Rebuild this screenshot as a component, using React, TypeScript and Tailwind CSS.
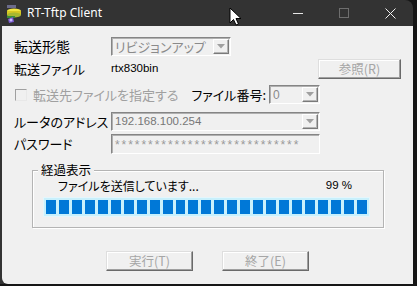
import React from 'react';

const jp = "font-['Noto_Sans_CJK_JP',sans-serif] [font-feature-settings:'palt'_1] whitespace-nowrap";

function ArrowBtn() {
  return (
    <div className="w-[16px] h-full flex items-center justify-center border border-t-white border-l-white border-r-[#7a7a7a] border-b-[#7a7a7a] bg-[#f0f0f0] shadow-[inset_-1px_-1px_0_#b4b4b4]">
      <svg width="8" height="5" viewBox="0 0 8 5">
        <path d="M0 0 H8 L4 4.5 Z" fill="#a0a0a0" />
      </svg>
    </div>
  );
}

function Combo({ text, className, textClass }: { text: string; className: string; textClass: string }) {
  return (
    <div className={`flex h-full border border-t-[#858585] border-l-[#858585] border-r-white border-b-white bg-[#f0f0f0] shadow-[inset_1px_1px_0_#b0b0b0] p-[1px] ${className}`}>
      <div className={`flex-1 flex items-center pl-[2px] text-[#8a8a8a] ${textClass}`}>{text}</div>
      <ArrowBtn />
    </div>
  );
}

function Button({ label, className }: { label: string; className: string }) {
  return (
    <div
      className={`h-[20px] flex items-center justify-center border border-t-[#dedede] border-l-[#dedede] border-r-[#6a6a6a] border-b-[#6a6a6a] shadow-[inset_-1px_-1px_0_#a0a0a0,inset_1px_1px_0_#ffffff] bg-[#f0f0f0] text-[12.5px] text-[#a6a6a6] ${jp} ${className}`}
    >
      {label}
    </div>
  );
}

function AppIcon() {
  return (
    <svg width="18" height="20" viewBox="0 0 18 20">
      <rect x="2" y="1" width="9" height="3" fill="#6b6b8a" />
      <ellipse cx="9" cy="7" rx="7" ry="2.5" fill="#f2e640" />
      <rect x="2" y="7" width="14" height="4" fill="#d8c820" />
      <ellipse cx="9" cy="11" rx="7" ry="2.5" fill="#a8b830" />
      <rect x="2" y="12" width="8" height="2" fill="#3a8a3a" />
      <path d="M3 15 L8 13 L9 18 L4 19 Z" fill="#7a5ad0" />
      <circle cx="6" cy="16" r="1.5" fill="#c8b8ff" />
    </svg>
  );
}

function Cursor() {
  return (
    <svg width="13" height="19" viewBox="0 0 13 19" className="absolute left-[229px] top-[7px]">
      <path d="M1 1 V16 L4.5 12.5 L7 18 L9.5 17 L7 11.5 H12 Z" fill="#ffffff" stroke="#000000" strokeWidth="1" strokeLinejoin="round" />
    </svg>
  );
}

export default function App() {
  const blocks = Array.from({ length: 25 });

  return (
    <div className="w-[417px] h-[286px] bg-[#161616] overflow-hidden relative">
      <div className="w-[413px] h-[284px] flex flex-col bg-[#333333] rounded-tr-[8px]">
        {/* title bar */}
        <div className="h-[26px] flex items-center shrink-0">
          <div className="ml-[5px] mt-[1px]">
            <AppIcon />
          </div>
          <span className="ml-[4px] text-[12px] text-white font-['Noto_Sans',sans-serif]">RT-Tftp Client</span>
          <div className="ml-auto flex items-center h-full">
            <div className="w-[46px] h-full flex items-center justify-center">
              <div className="w-[10px] h-[1px] bg-[#e6e6e6]" />
            </div>
            <div className="w-[46px] h-full flex items-center justify-center">
              <div className="w-[10px] h-[10px] border border-[#6e6e6e]" />
            </div>
            <div className="w-[46px] h-full flex items-center justify-center">
              <svg width="11" height="11" viewBox="0 0 11 11">
                <path d="M0.5 0.5 L10.5 10.5 M10.5 0.5 L0.5 10.5" stroke="#f0f0f0" strokeWidth="1" />
              </svg>
            </div>
          </div>
        </div>

        {/* body */}
        <div className={`ml-[2px] flex-1 bg-[#f0f0f0] rounded-bl-[6px] flex flex-col text-[13px] text-black ${jp}`}>
          <div className="mt-[11px] h-[19px] flex items-center">
            <span className="w-[109px] pl-[12px] text-[14px]">転送形態</span>
            <Combo text="リビジョンアップ" className="w-[120px]" textClass="text-[13px]" />
          </div>

          <div className="mt-[3px] h-[20px] flex items-center">
            <span className="w-[109px] pl-[12px]">転送ファイル</span>
            <span className="text-[11.5px] font-['Liberation_Sans',sans-serif]">rtx830bin</span>
            <Button label="参照(R)" className="ml-auto mr-[12px] w-[83px]" />
          </div>

          <div className="mt-[6px] h-[19px] flex items-center">
            <div className="ml-[13px] w-[12px] h-[12px] border border-t-[#a0a0a0] border-l-[#a0a0a0] border-r-[#e8e8e8] border-b-[#e8e8e8] bg-[#f0f0f0]" />
            <span className="ml-[6px] text-[#a0a0a0]">転送先ファイルを指定する</span>
            <span className="ml-auto mr-[3px]">ファイル番号:</span>
            <Combo text="0" className="w-[51px] mr-[93px]" textClass="text-[12px] font-['Liberation_Sans',sans-serif]" />
          </div>

          <div className="mt-[8px] h-[19px] flex items-center">
            <span className="w-[109px] pl-[12px]">ルータのアドレス</span>
            <Combo text="192.168.100.254" className="w-[209px]" textClass="text-[11.5px] font-['Liberation_Sans',sans-serif] text-[#777]" />
          </div>

          <div className="mt-[3px] h-[20px] flex items-center">
            <span className="w-[109px] pl-[12px]">パスワード</span>
            <div className="w-[209px] h-full flex items-center pl-[3px] pt-[2px] border border-t-[#858585] border-l-[#858585] border-r-white border-b-white shadow-[inset_1px_1px_0_#b0b0b0] bg-[#f0f0f0] text-[12px] text-[#9a9a9a] font-['Liberation_Sans',sans-serif] tracking-[1.95px]">
              ****************************
            </div>
          </div>

          {/* group box */}
          <div className="mt-[16px] ml-[30px] w-[352px] h-[58px] relative border border-[#b4b4b4] shadow-[1px_1px_0_#ffffff,inset_1px_1px_0_#ffffff]">
            <span className="absolute left-[5px] top-[-10px] px-[3px] bg-[#f0f0f0] text-[12.5px] leading-[18px]">経過表示</span>
            <div className="mt-[6px] h-[18px] flex items-center text-[12px]">
              <span className="ml-[25px]">ファイルを送信しています...</span>
              <span className="ml-auto mr-[31px] text-[11.5px] font-['Liberation_Sans',sans-serif]">99 %</span>
            </div>
            <div className="mt-[2px] ml-[10px] w-[327px] h-[20px] flex gap-[3px] p-[2px] bg-[#c8f0fc] border border-[#e4f6fc]">
              {blocks.map((_, i) => (
                <div key={i} className="w-[10px] h-full bg-[#0078d7]" />
              ))}
            </div>
          </div>

          <div className="mt-[23px] flex">
            <Button label="実行(T)" className="ml-[104px] w-[87px]" />
            <Button label="終了(E)" className="ml-[29px] w-[87px]" />
          </div>
        </div>
      </div>
      <Cursor />
    </div>
  );
}
